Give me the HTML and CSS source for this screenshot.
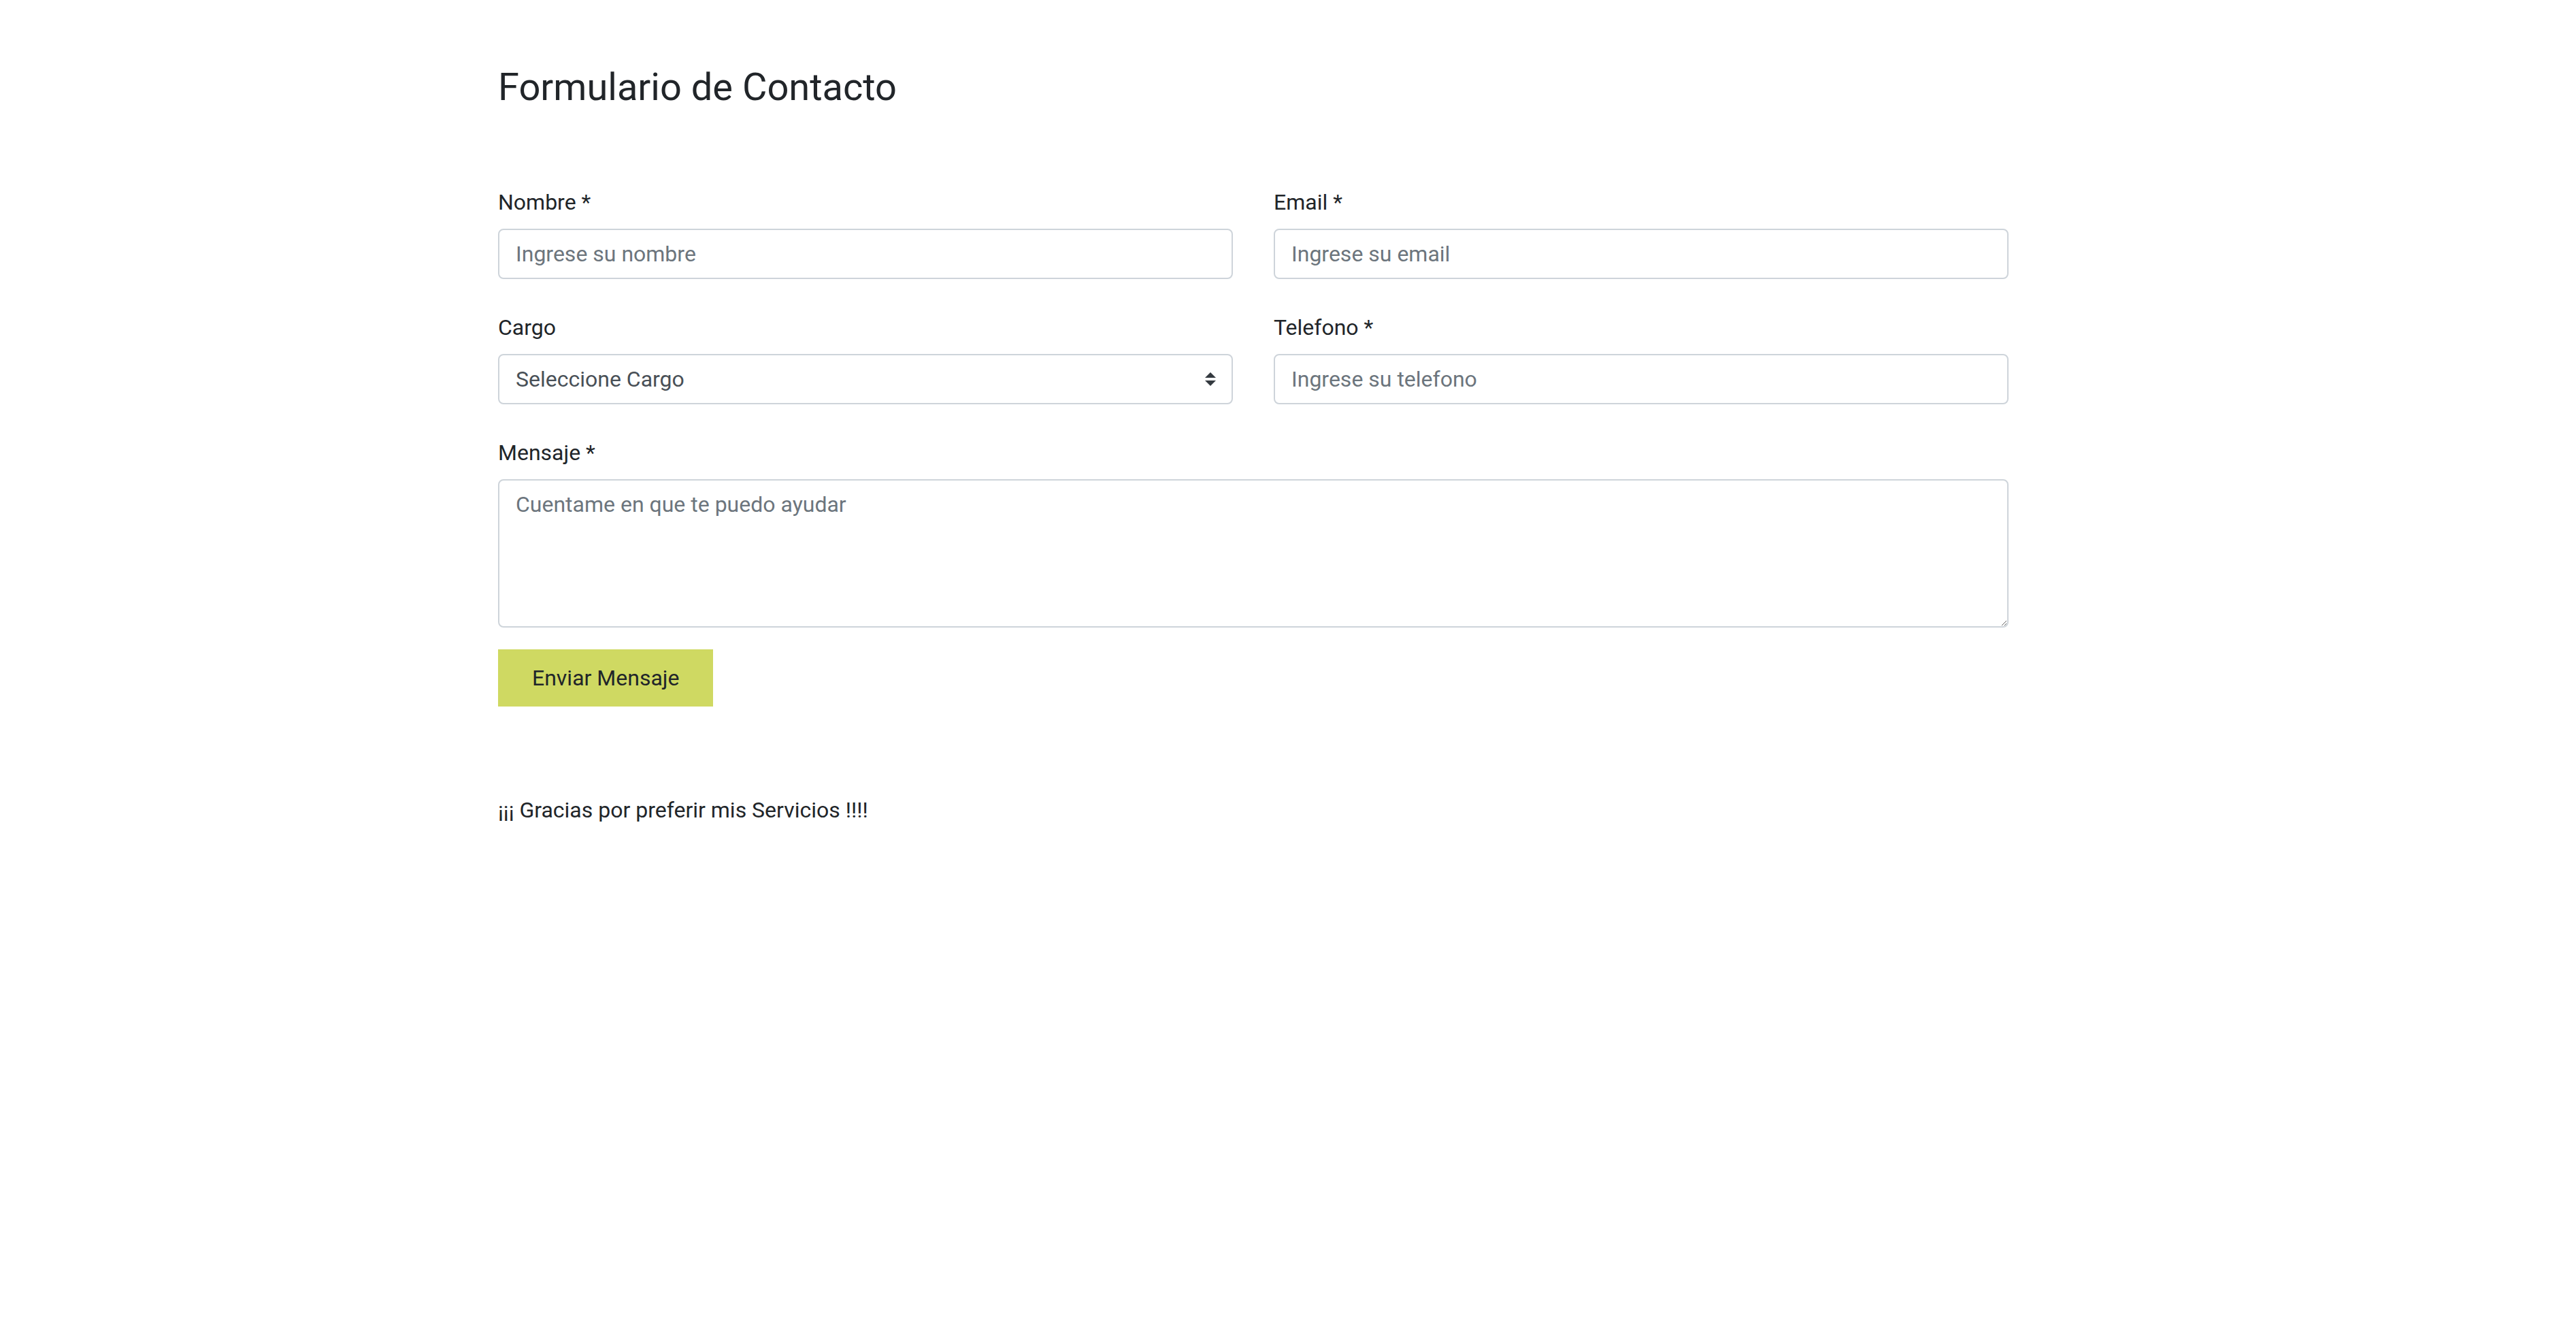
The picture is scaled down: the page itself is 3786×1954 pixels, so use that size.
FILE: index.html
```html
<!DOCTYPE html>
<html lang="es">
<head>
<meta charset="utf-8">
<title>Formulario de Contacto</title>
<link rel="stylesheet" href="styles.css">
</head>
<body>
<main class="page">
  <h3 class="title">Formulario de Contacto</h3>
  <form class="form">
    <div class="row">
      <div class="group">
        <label class="label" for="nombre">Nombre *</label>
        <input class="control" id="nombre" type="text" placeholder="Ingrese su nombre">
      </div>
      <div class="group">
        <label class="label" for="email">Email *</label>
        <input class="control" id="email" type="email" placeholder="Ingrese su email">
      </div>
    </div>
    <div class="row">
      <div class="group">
        <label class="label" for="cargo">Cargo</label>
        <div class="select-wrap">
          <select class="control select" id="cargo">
            <option>Seleccione Cargo</option>
          </select>
          <svg class="select-arrow" viewBox="0 0 4 5" width="16" height="20" aria-hidden="true"><path fill="#343a40" d="M2 0L0 2h4zm0 5L0 3h4z"/></svg>
        </div>
      </div>
      <div class="group">
        <label class="label" for="telefono">Telefono *</label>
        <input class="control" id="telefono" type="text" placeholder="Ingrese su telefono">
      </div>
    </div>
    <div class="group">
      <label class="label" for="mensaje">Mensaje *</label>
      <textarea class="control textarea" id="mensaje" placeholder="Cuentame en que te puedo ayudar"></textarea>
    </div>
    <button class="btn" type="button">Enviar Mensaje</button>
  </form>
  <p class="thanks">¡¡¡ Gracias por preferir mis Servicios !!!!</p>
</main>
</body>
</html>
```
FILE: styles.css
```css
* { box-sizing: border-box; }

html, body {
  margin: 0;
  padding: 0;
  background: #fff;
}

body {
  font-family: Roboto, "Liberation Sans", Arial, sans-serif;
  font-size: 32px;
  line-height: 1.5;
  color: #212529;
}

.page {
  width: 2220px;
  margin-left: 732px;
  padding-top: 95px;
}

.title {
  margin: 0;
  font-size: 56px;
  font-weight: 400;
  line-height: 1.2;
  color: #212529;
}

.form {
  margin-top: 111px;
}

.row {
  display: grid;
  grid-template-columns: 1fr 1fr;
  column-gap: 60px;
}

.group {
  margin-bottom: 47px;
}

.label {
  display: block;
  margin-bottom: 15px;
  line-height: 48px;
}

.control {
  display: block;
  width: 100%;
  height: 74px;
  padding: 11px 24px;
  font-family: inherit;
  font-size: 32px;
  line-height: 48px;
  color: #495057;
  background: #fff;
  border: 2px solid #ced4da;
  border-radius: 8px;
  outline: none;
}

.control::placeholder {
  color: #6c757d;
  opacity: 1;
}

.select-wrap {
  position: relative;
}

.select {
  -webkit-appearance: none;
  appearance: none;
  padding-right: 64px;
}

.select-arrow {
  position: absolute;
  right: 25px;
  top: 27px;
  pointer-events: none;
}

.group:has(.textarea) {
  margin-bottom: 32px;
}

.textarea {
  height: 218px;
  resize: vertical;
}

.btn {
  display: inline-block;
  margin: 0;
  padding: 18px 50px;
  font-family: inherit;
  font-size: 32px;
  line-height: 48px;
  color: #212529;
  background: #cfd962;
  border: 0;
  border-radius: 0;
}

.thanks {
  margin: 128px 0 0;
  line-height: 48px;
}
```
